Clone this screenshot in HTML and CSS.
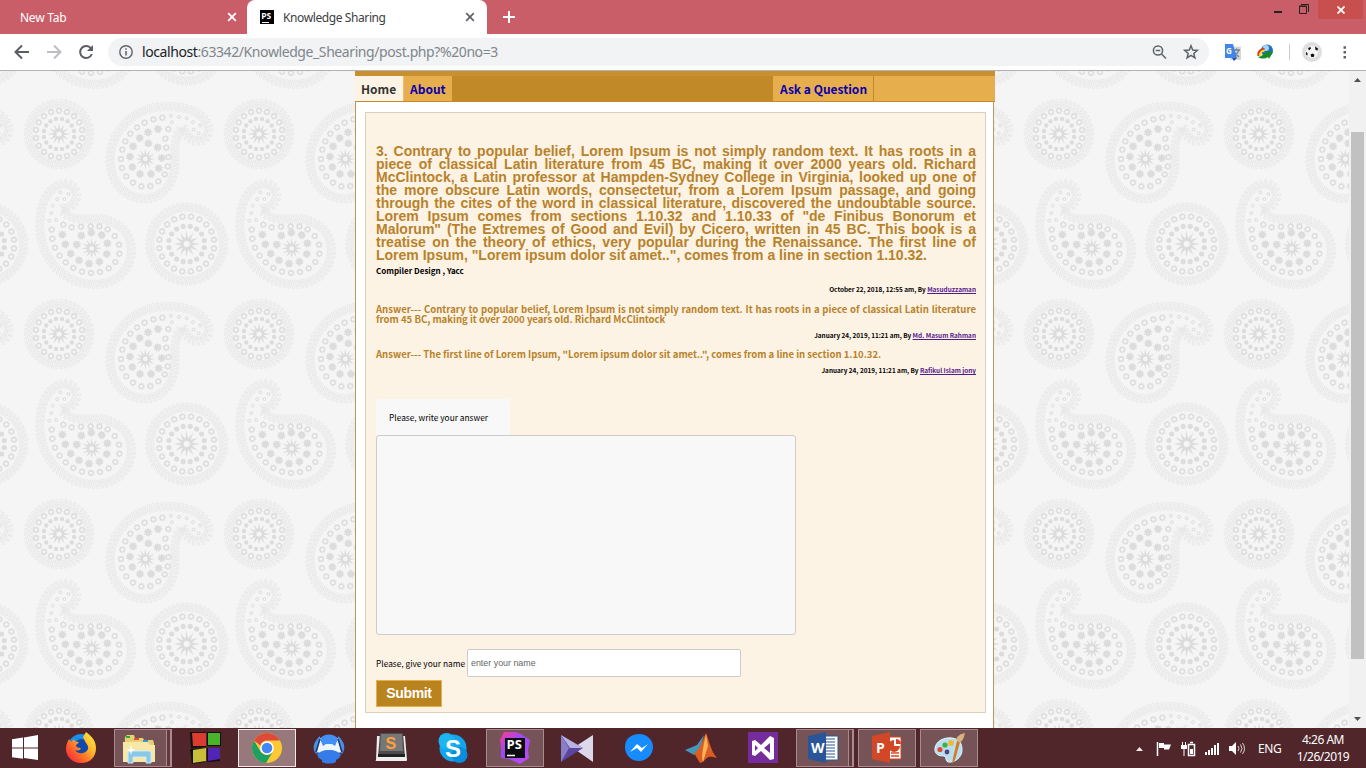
FILE: index.html
```html
<!DOCTYPE html>
<html lang="en">
<head>
<meta charset="utf-8">
<title>Knowledge Sharing</title>
<link rel="stylesheet" href="styles.css">
</head>
<body>
<div class="screen">
  <header class="tabstrip">
    <div class="tab tab-idle"><span class="t-new">New Tab</span>
      <svg width="10" height="10" viewBox="0 0 10 10"><path d="M1.2 1.2l7.6 7.6M8.800 1.200L1.200 8.800" stroke="#fff" stroke-width="1.8"/></svg></div>
    <div class="tab tab-on">
      <svg width="14" height="14" viewBox="0 0 14 14"><rect width="14" height="14"/><path d="M2 12.500h7" stroke="#fff"/><text x="1.200" y="9" class="ps-small">PS</text></svg>
      <span class="t-title">Knowledge Sharing</span>
      <svg width="10" height="10" viewBox="0 0 10 10"><path d="M1.200 1.200l7.600 7.600M8.800 1.200L1.200 8.800" stroke="#5f6368" stroke-width="1.7"/></svg></div>
    <svg class="plus" width="12" height="12" viewBox="0 0 12 12"><path d="M6 0v12M0 6h12" stroke="#fff" stroke-width="2"/></svg>
    <div class="winctl">
      <svg width="58" height="20" viewBox="0 0 58 20"><path d="M14 12h8" stroke="#222" stroke-width="2"/><path d="M39.500 6.500h7v7h-7zM39 6h8M41 4.500h7.500V12" fill="none" stroke="#222"/></svg>
      <div class="close"><svg width="8" height="8" viewBox="0 0 8 8"><path d="M.5.5l7 7M7.500.5l-7 7" stroke="#fff" stroke-width="1.800"/></svg></div>
    </div>
  </header>
  <div class="toolbar">
    <svg class="nav-icons" width="108" height="36" viewBox="0 0 108 36" fill="none" stroke-width="2">
      <path d="M29 18H16M22 11.500L15.500 18l6.500 6.500" stroke="#5a5e63"/>
      <path d="M47 18h13M54 11.500l6.500 6.500-6.500 6.500" stroke="#bcbec1"/>
      <path d="M91 14.500a6 6 0 1 0 .8 5.500" stroke="#5a5e63"/><path d="M93 11v6h-6z" fill="#5a5e63"/>
    </svg>
    <div class="omnibox">
      <svg width="14" height="14" viewBox="0 0 14 14"><circle cx="7" cy="7" r="6.200" fill="none" stroke="#5f6368" stroke-width="1.400"/><path d="M7 6v4.500M7 3.300v1.500" stroke="#5f6368" stroke-width="1.500"/></svg>
      <span class="url"><b>localhost</b>:63342/Knowledge_Shearing/post.php?%20no=3</span>
      <svg class="omni-end" width="50" height="18" viewBox="0 0 50 18" fill="none" stroke="#5f6368" stroke-width="1.500"><circle cx="7" cy="7.500" r="4.600"/><path d="M10.500 11l4.500 4.500M4.700 7.500h4.600"/><path d="M40 2.800l1.700 4.300 4.600.3-3.500 3 1.100 4.500L40 12.400l-3.900 2.500 1.100-4.500-3.500-3 4.600-.3z"/></svg>
    </div>
    <svg class="exts" width="156" height="36" viewBox="0 0 156 36">
      <path d="M21 12.500h10V26H20z" fill="#d8d8d8"/><path d="M23 16h7M26.500 14.500V16M29 16c-1 3-3 5-5 6M24 18l5 5" stroke="#6f8390" stroke-width="1.300" fill="none"/>
      <path d="M15 10h8l4 14H15z" fill="#4285e8"/><path d="M22 24h5l-3 3z" fill="#3949ab"/><text x="16" y="20" class="gt">G</text>
      <circle cx="57" cy="16.500" r="6" fill="#236fc2"/><circle cx="56" cy="14" r="3" fill="#a9d5ff"/><path d="M48.500 22c-1-4 2-7 6-7" stroke="#dd3520" stroke-width="2.200" fill="none"/><path d="M50.500 22c-1-3 1-5 4-5.500" stroke="#f5df20" stroke-width="2" fill="none"/><path d="M48 23c3 0 5-3 8-4l-1-2 8 1-4 7-1-2c-3 2-7 2-10 0z" fill="#168b23"/>
      <path d="M79.500 10v16" stroke="#ccc"/>
      <circle cx="102" cy="18" r="10" fill="#dedede"/><circle cx="102" cy="18" r="6" fill="#f6f6f6"/><path d="M100.500 20.500l2-1 2 1.300-.8 2.200h-2.400zM98 14l2.500-1 .5 1.500-2 2zM105 12.500l3 2-.5 2-2-.5zM96 18l1.500 1v2.500l-1.500-1z" fill="#111"/>
      <path d="M133.500 12.300h2.500v2.500h-2.500zM133.500 17.100h2.500v2.500h-2.500zM133.500 21.900h2.500v2.500h-2.500z" fill="#5f6368"/>
    </svg>
  </div>

  <main class="viewport">
    <svg class="wall" width="1349" height="657" viewBox="0 0 1349 657">
      <defs><pattern id="paisley" width="600" height="600" patternUnits="userSpaceOnUse" patternTransform="translate(0 1) scale(.33333)"></pattern></defs>
      <rect width="1349" height="657" fill="#f5f5f5"/><rect width="1349" height="657" fill="url(#paisley)"/>
    </svg>
    <div class="page">
      <nav class="menu">
        <a class="home">Home</a><a class="about">About</a><span class="fill"></span><a class="ask">Ask a Question</a><span class="rest"></span>
      </nav>
      <div class="sheet">
        <section class="card">
          <h1>3. Contrary to popular belief, Lorem Ipsum is not simply random text. It has roots in a<br>piece of classical Latin literature from 45 BC, making it over 2000 years old. Richard<br>McClintock, a Latin professor at Hampden-Sydney College in Virginia, looked up one of<br>the more obscure Latin words, consectetur, from a Lorem Ipsum passage, and going<br>through the cites of the word in classical literature, discovered the undoubtable source.<br>Lorem Ipsum comes from sections 1.10.32 and 1.10.33 of "de Finibus Bonorum et<br>Malorum" (The Extremes of Good and Evil) by Cicero, written in 45 BC. This book is a<br>treatise on the theory of ethics, very popular during the Renaissance. The first line of<br><span class="last">Lorem Ipsum, "Lorem ipsum dolor sit amet..", comes from a line in section 1.10.32.</span></h1>
          <p class="tags">Compiler Design , Yacc</p>
          <p class="by by1">October 22, 2018, 12:55 am, By <a>Masuduzzaman</a></p>
          <p class="answer"><span class="full">Answer--- Contrary to popular belief, Lorem Ipsum is not simply random text. It has roots in a piece of classical Latin literature</span><span>from 45 BC, making it over 2000 years old. Richard McClintock</span></p>
          <p class="by by2">January 24, 2019, 11:21 am, By <a>Md. Masum Rahman</a></p>
          <p class="answer"><span class="a2">Answer--- The first line of Lorem Ipsum, "Lorem ipsum dolor sit amet..", comes from a line in section 1.10.32.</span></p>
          <p class="by by3">January 24, 2019, 11:21 am, By <a>Rafikul Islam jony</a></p>
          <div class="label">Please, write your answer</div>
          <div class="textarea"></div>
          <div class="row"><span class="lbl">Please, give your name</span><div class="input">enter your name</div></div>
          <div class="submit">Submit</div>
        </section>
      </div>
    </div>
    <div class="scroll"><svg width="17" height="657" viewBox="0 0 17 657"><rect width="17" height="657" fill="#f1f1f1"/><rect x="2" y="61" width="13" height="527" fill="#c1c1c1"/><path d="M5 11h7L8.500 7zM5 646h7l-3.500 4z" fill="#505050"/></svg></div>
  </main>

  <footer class="taskbar">
    <svg class="start" viewBox="0 0 50 40"><path d="M12 11.200L23 9.600v10H12zM24 9.400L38 7v12.600H24zM12 20.600h11v10.200l-11-1.500zM24 20.600h14V32l-14-2z" fill="#fff"/></svg>
    <div class="slot"><svg viewBox="0 0 58 40"><defs><linearGradient id="fx" x1="1" y1="0" x2="0" y2="1"><stop offset="0" stop-color="#fff44a"/><stop offset=".4" stop-color="#ffb02a"/><stop offset=".7" stop-color="#ff5a2a"/><stop offset="1" stop-color="#ef1558"/></linearGradient></defs>
      <circle cx="29" cy="19" r="13" fill="#1c8eea"/><circle cx="30" cy="19" r="8" fill="#1348a8"/><path d="M34 4c5 4 10 8 10 16 0 9-6 15-15 15-8 0-15-6-15-14 0-5 2-8 3-10l2 3 3-3c0 2 2 3 5 3-1 2-3 2-3 4 0 1 3 2 5 2-1 3-4 3-6 2 3 5 11 4 13-1 1-4-3-6-5-12 1-2 2-3 3-5z" fill="url(#fx)"/></svg></div>
    <div class="slot open stack"><svg viewBox="0 0 58 40"><path d="M12 9l2-2h7l1 3h8l1 2h9l1 3v18H11z" fill="#e8cf72"/><path d="M10 14h25l2 3h5v17H10z" fill="#f7e8a8"/><path d="M13 8h4v2h-4z" fill="#27ae37"/><path d="M21 10h5v2h-5z" fill="#d9533c"/><path d="M30 12h5v2h-5z" fill="#3197e0"/><path d="M15 35v-9c0-2 1-3 3-3h17c2 0 3 1 3 3v9h-5v-6H20v6z" fill="#8ac8e8" stroke="#c9ecfb"/><path d="M18 17l1 4 4 1-4 1-1 4-1-4-4-1 4-1z" fill="#fff"/></svg></div>
    <div class="slot"><svg viewBox="0 0 58 40"><path d="M14 4h16v15l-15 1zM14 21l15-1v14l-13 2zM31 4h14v14H31zM31 20h13v13l-13 1z" fill="#10100c"/><path d="M16 5h14v13H17z" fill="#dc3c30"/><path d="M32 5h12v12H32z" fill="#49b32c"/><path d="M17 22l13-2v13l-13 2z" fill="#c8be3a"/><path d="M32 20h12v11l-12 2z" fill="#5224b4"/></svg></div>
    <div class="slot open active"><svg viewBox="0 0 58 40"><circle cx="29" cy="20" r="15" fill="#fcc934"/><path d="M16 12.500A15 15 0 0 1 42 12.500H29a7 7 0 0 0-6.500 5z" fill="#df4938"/><path d="M16 12.500A15 15 0 0 0 28 35l7-11.500c-3 5-10 4-12.500 0z" fill="#1da061"/><circle cx="29" cy="20" r="6.800" fill="#fff"/><circle cx="29" cy="20" r="5.300" fill="#4285f4"/></svg></div>
    <div class="slot"><svg viewBox="0 0 58 40"><path d="M20 8c-7 6-8 13-4 18l4-3zM38 8c7 6 8 13 4 18l-4-3z" fill="#4b8fe6"/><path d="M20 10l18 0 3 14-12 4-12-4z" fill="#eef5ff"/><path d="M20 11c3-6 15-6 18 0l-3 7-3-2h-6l-3 2z" fill="#438ff4"/><path d="M17 26c4-2 5-4 12-4s8 2 12 4c-1 4-3 5-5 6v2c-4 2-10 2-14 0v-2c-2-1-4-2-5-6z" fill="#367ce9"/><path d="M20 11l-4 13M38 11l4 13" stroke="#173a70" stroke-width="1.500"/></svg></div>
    <div class="slot"><svg viewBox="0 0 58 40"><path d="M15 8h28l2 24c0 1-1 1-2 1H15c-1 0-2 0-1-1z" fill="#eee"/><path d="M18 5h23l2 24H16z" fill="#4c4c4c"/><path d="M16 26h27v3H16z" fill="#222"/><path d="M19 6h21l1 17H18z" fill="#777"/><text x="23.500" y="21" class="sub">S</text></svg></div>
    <div class="slot"><svg viewBox="0 0 58 40"><circle cx="29" cy="20" r="13.500" fill="#12a7ed"/><circle cx="22.500" cy="13" r="8" fill="#1bb5f2"/><circle cx="35.500" cy="27" r="8" fill="#078ddd"/><text x="21" y="28.500" class="skype">S</text></svg></div>
    <div class="slot open"><svg viewBox="0 0 58 40"><defs><linearGradient id="ps" x1="0" y1="0" x2=".8" y2="1"><stop offset="0" stop-color="#ff3b92"/><stop offset=".45" stop-color="#9b48fa"/><stop offset="1" stop-color="#bc4af5"/></linearGradient></defs><path d="M18 4l12 0 5 2 9 6-2 10 1 8-9 6-11-5-8-1 0-10-1-8z" fill="url(#ps)"/><rect x="19" y="10" width="20" height="20" fill="#0c0c10"/><path d="M21 27.500h8" stroke="#fff" stroke-width="1.500"/><text x="20.500" y="21" class="psbig">PS</text></svg></div>
    <div class="slot"><svg viewBox="0 0 58 40"><path d="M45 7L25 20l20 14z" fill="#ddd8e9"/><path d="M13 7l22 13-22 14z" fill="#5a45a0"/><path d="M13 7l22 13-13 0z" fill="#b9b2de"/><path d="M13 7l8 13-8 14z" fill="#8a7dc8"/></svg></div>
    <div class="slot"><svg viewBox="0 0 58 40"><path d="M29 6c8 0 14 6 14 13s-6 14-14 14c-8 0-14-6-14-14s6-13 14-13z" fill="#168cff"/><path d="M20 24l7-8 5 4 6-4-7 8-4-4z" fill="#fff"/></svg></div>
    <div class="slot"><svg viewBox="0 0 58 40"><path d="M13 22l12-5 7-10-4 15-6 5z" fill="#4795b8"/><path d="M34 5c2 4 5 19 11 25-5-1-7-2-10 0-2 1-4 5-7 5l-6-10c5-1 9-14 12-20z" fill="#dc5d23"/><path d="M34 6l2 12-5 16c-2-5 0-14 3-28z" fill="#ffb455"/></svg></div>
    <div class="slot"><svg viewBox="0 0 58 40"><path d="M14 4h30v31H14z" fill="#752c9c"/><path fill-rule="evenodd" d="M18 13l3-1 6 5 9-9 4 2v21l-4 1-9-9-6 5-3-1zM21 17v6l3-3zM30 20l6 5V15z" fill="#fff"/></svg></div>
    <div class="slot open stack"><svg viewBox="0 0 58 40"><path d="M29 8h14v24H29z" fill="#fff" stroke="#2b5797"/><path d="M31 11h9M31 14h9M31 17h9M31 20h9M31 23h9M31 26h9M31 29h9" stroke="#2b5797" stroke-width="1.200"/><path d="M13 8l18-4v31l-18-4z" fill="#2a5699"/><text x="16" y="25" class="off" textLength="12">W</text></svg></div>
    <div class="slot open"><svg viewBox="0 0 58 40"><path d="M29 9h14v22H29z" fill="#fff" stroke="#d24726"/><path d="M36 12v6h6a6 6 0 1 1-6-6zM38 11a5 5 0 0 1 5 5h-5z" fill="#d24726"/><path d="M33 25h8M33 28h8" stroke="#d24726" stroke-width="1.300"/><path d="M14 8l18-4v31l-18-4z" fill="#d24726"/><text x="18" y="25" class="off">P</text></svg></div>
    <div class="slot open"><svg viewBox="0 0 58 40"><path d="M15 20c1-7 9-11 17-10s10 6 10 12c0 8-8 13-14 12-3-1-1-5-4-6-4 0-10-1-9-8z" fill="#b8dff0" stroke="#e6f5fb"/><circle cx="20" cy="21.500" r="2.600" fill="#e04a39"/><circle cx="25" cy="17" r="2.600" fill="#43ad41"/><circle cx="31" cy="15" r="3" fill="#f2b83a"/><circle cx="27" cy="24" r="2.400" fill="#547"/><path d="M40 14l-5 18-3 4 1-6 4-17z" fill="#d77a23"/><path d="M36 12c1-4 4-6 9-7-1 3-1 6-4 9z" fill="#d8b17c"/></svg></div>
    <div class="tray">
      <svg width="120" height="40" viewBox="0 0 120 40"><path d="M6 23h7l-3.500-4z" fill="#f4eaea"/>
      <path d="M27.500 14v14" stroke="#fff" stroke-width="1.500"/><path d="M29 15h5v1.500h7l-2 5h-5V20h-5z" fill="#fff"/>
      <path d="M52.500 14v4M55.500 14v4M54 21v7" stroke="#fff"/><path d="M51 17h6v4h-6z" fill="#fff"/><path d="M58.500 16.500h6v11h-6zM60 14.500h3" stroke="#fff" stroke-width="1.500" fill="none"/><path d="M60 21h3v5h-3z" fill="#fff"/>
      <path d="M75 24h2v3h-2zM78 22h2v5h-2zM81 20h2v7h-2zM84 17h2v10h-2zM87 15h2v12h-2z" fill="#fff"/>
      <path d="M99 18h3l4-4v13l-4-4h-3z" fill="#fff"/><path d="M108 18q2 2.500 0 5M110.500 16.500q3 4 0 8M112.500 15q4 5.500 0 11" stroke="#fff" stroke-width=".8" fill="none"/></svg>
      <span class="eng">ENG</span>
      <span class="clock">4:26 AM<br>1/26/2019</span>
    </div>
  </footer>
</div>
<script src="pattern.js"></script>
</body>
</html>
```
FILE: styles.css
```css
* { box-sizing: border-box; }
body { margin: 0; overflow: hidden; font-family: "Noto Sans", "Open Sans", sans-serif; }
.screen { width: 1366px; height: 768px; display: flex; flex-direction: column; }
svg { display: block; flex: none; }
.tabstrip { height: 34px; background: #c95e68; display: flex; align-items: flex-start; }
.tab { height: 34px; display: flex; align-items: center; font-size: 12px; white-space: nowrap; }
.tab-idle { width: 247px; padding: 0 10px 0 20px; justify-content: space-between; color: #fff; }
.tab-on { width: 240px; background: #fff; border-radius: 8px 8px 0 0; padding: 0 12px 0 13px; color: #3c4043; }
.t-title { margin-left: 9px; flex: 1; letter-spacing: -.4px; }
.t-new { letter-spacing: -.25px; }
.plus { margin: 11px 0 0 16px; }
.winctl { margin-left: auto; display: flex; width: 103px; margin-right: 3px; }
.close { width: 45px; height: 19px; background: #c7504f; display: flex; align-items: center; justify-content: center; }
.ps-small { font: bold 8.500px "Open Sans", sans-serif; fill: #fff; }
.toolbar { height: 37px; background: #fff; border-bottom: 1px solid #b3b1b2; display: flex; }
.omnibox { width: 1101px; height: 28px; margin-top: 4px; border-radius: 14px; background: #f1f3f4; display: flex; align-items: center; padding-left: 11px; }
.url { margin-left: 9px; font-size: 14px; color: #80868b; white-space: nowrap; letter-spacing: -.41px; margin-top: -1px; }
.url b { font-weight: 400; color: #202124; }
.omni-end { margin: 0 8px 0 auto; }
.exts { margin-left: 1px; }
.gt { font: bold 8px "Open Sans", sans-serif; fill: #fff; }
.viewport { height: 657px; display: grid; grid-template-columns: 355px 640px 1fr 17px; overflow: hidden; }
.wall { grid-area: 1 / 1 / 2 / 4; }
.page { grid-area: 1 / 2; display: flex; flex-direction: column; font-family: "Noto Sans CJK SC", sans-serif; }
.scroll { grid-area: 1 / 4; }
.menu { border-top: 5px solid #c9902f; height: 31px; border-bottom: 1px solid #c28a2b; display: flex; font-size: 12px; line-height: 25px; font-weight: 700; background: #c28928; flex: none; white-space: nowrap; }
.home { width: 49px; background: #fdf3e5; color: #333; padding-left: 6px; border-right: 1px solid #f0be6b; }
.about { width: 48px; background: #e6ae4c; padding-left: 6px; color: #0a00ad; }
.fill { flex: 1; }
.ask { width: 101px; background: #e6ae4c; padding-left: 7px; border-right: 1px solid #c28928; color: #0a00ad; }
.rest { width: 121px; background: #e6ae4c; }
.sheet { width: 639px; flex: 1; background: #fff; border: solid #b9975a; border-width: 0 1px; padding: 10px 7px 0 9px; }
.card { width: 621px; height: 601px; border: 1px solid #d9d0c2; background: #fdf3e5; padding: 32px 0 0 10px; }
h1 { margin: 0; width: 600px; font: bold 14px/13px "Liberation Sans", Arial, sans-serif; color: #b8822a; text-align: justify; text-align-last: justify; }
.last { display: inline-block; width: 551px; white-space: nowrap; }
p { margin: 0; width: 600px; font-weight: 700; white-space: nowrap; }
.tags { font-size: 8px; line-height: 12px; margin-top: 3px; color: #000; }
.by { font-size: 6.400px; line-height: 10px; text-align: right; color: #000; }
.by a { color: #551a8b; text-decoration: underline; }
.by1 { margin-top: 8px; }
.by2 { margin-top: 7px; }
.by3 { margin-top: 7px; }
.answer { font-size: 9.550px; line-height: 10px; margin-top: 9px; color: #b8822a; }
.by2 + .answer { margin-top: 8px; }
.answer span { display: block; }
.answer .full { text-align-last: justify; }
.label { width: 134px; height: 36px; margin-top: 23px; background: #f8f8f8; border-radius: 3px 3px 0 0; padding-left: 13px; font-size: 8.350px; line-height: 36px; white-space: nowrap; }
.textarea { width: 420px; height: 200px; background: #f8f8f8; border: 1px solid #ccc; border-radius: 3px; }
.row { display: flex; margin-top: 14px; align-items: center; font-size: 8.350px; }
.lbl { width: 91px; white-space: nowrap; }
.input { width: 274px; height: 28px; border: 1px solid #ccc; border-radius: 2px; background: #fff; font: 8.900px/26px "Liberation Sans", Arial, sans-serif; color: #666; padding-left: 3px; }
.submit { width: 66px; height: 27px; margin-top: 3px; background: #b9831f; border: 1px solid #e6ae4c; color: #fff; text-align: center; font: bold 14px/25px "Liberation Sans", Arial, sans-serif; letter-spacing: -.35px; }
.taskbar { height: 40px; background: #50262b; display: flex; }
.start { width: 50px; height: 40px; margin-right: 2px; }
.slot { width: 58px; height: 40px; margin-right: 4px; flex: none; }
.slot svg { width: 58px; height: 40px; }
.open { height: 38px; margin-top: 1px; background: #765357; border: 1px solid #a68c8f; }
.open svg { margin: -2px 0 0 -1px; }
.active { background: #97797c; border-color: #efe9e9; }
.stack { width: 53px; margin-right: 9px; box-shadow: 4px 0 0 -1px #62383d, 5px 0 0 0 #a68c8f; }
.stack svg { margin-left: -2px; }
.sub { font: bold 16px "Liberation Sans", sans-serif; fill: #ffa13d; }
.skype { font: bold 24px "Liberation Sans", sans-serif; fill: #fff; }
.psbig { font: bold 13px "Open Sans", sans-serif; fill: #fff; }
.off { font: bold 14px "Open Sans", sans-serif; fill: #fff; }
.tray { margin-left: auto; display: flex; align-items: center; color: #fff; font-size: 12px; width: 236px; }
.eng { width: 33px; margin-left: 8px; letter-spacing: -.4px; }
.clock { width: 56px; text-align: center; margin-left: 4px; line-height: 17px; letter-spacing: -.5px; white-space: nowrap; }
```
FILE: pattern.js
```js
const NS = 'http://www.w3.org/2000/svg';
const pattern = document.getElementById('paisley');

function ringTrim(d) {
  const p = document.createElementNS(NS, 'path');
  p.setAttribute('d', d);
  const len = p.getTotalLength();
  const n = Math.round(len / 12.5);
  let s = '';
  for (let i = 0; i < n; i++) {
    const t = i * len / n;
    const a = p.getPointAtLength(t), b = p.getPointAtLength(Math.min(len, t + 1));
    const dx = b.x - a.x, dy = b.y - a.y, m = Math.hypot(dx, dy) || 1;
    [-9, 0, 9].forEach((o, k) => {
      const sh = k * 4;
      s += `<circle cx="${a.x - dy / m * o + dx / m * sh}" cy="${a.y + dx / m * o + dy / m * sh}" r="4"/>`;
    });
  }
  return `<g fill="none" stroke="#e3e3e3" stroke-width="2.4">${s}</g>`;
}
function star(x, y, R, r, n) {
  let pts = '';
  for (let i = 0; i < n * 2; i++) {
    const q = i % 2 ? r : R, a = Math.PI * i / n;
    pts += `${x + q * Math.sin(a)},${y - q * Math.cos(a)} `;
  }
  return `<polygon points="${pts}" fill="#dcdcdc"/>`;
}
const flower = (x, y) => star(x, y, 11.5, 8, 10) + `<circle cx="${x}" cy="${y}" r="4.8" fill="#f5f5f5"/>`;
const bead = (x, y) => `<circle cx="${x}" cy="${y}" r="4.5" fill="none" stroke="#dadada" stroke-width="3"/>`;
const solid = (x, y) => star(x, y, 14, 9, 9);
const sun = (x, y, R) => star(x, y, R, R * .42, 12) + `<circle cx="${x}" cy="${y}" r="${R * .23}" fill="#f5f5f5"/>`;
const each = (pts, f) => pts.map(p => f(p[0], p[1])).join('');

function medallion(cx, cy, R, fr, nf, dr, sr) {
  const b = R - 13;
  let s = ringTrim(`M${cx - b} ${cy}a${b} ${b} 0 1 1 ${2 * b} 0a${b} ${b} 0 1 1 ${-2 * b} 0z`);
  for (let i = 0; i < nf; i++) {
    const a = 2 * Math.PI * i / nf + (nf === 20 ? .08 : 0) * 2;
    s += flower(cx + fr * Math.sin(a), cy - fr * Math.cos(a));
  }
  for (let i = 0; i < 16; i++) {
    const a = 2 * Math.PI * (i + .5) / 16;
    s += `<circle cx="${cx + dr * Math.sin(a)}" cy="${cy - dr * Math.cos(a)}" r="${R / 16}" fill="#dcdcdc"/>`;
  }
  return s + sun(cx, cy, sr);
}

const tile =
  medallion(177, 186, 105, 70, 18, 46, 34) +
  medallion(560, 516, 124, 83, 20, 54, 40) +
  ringTrim('M548 165C560 200 580 210 598 207C620 205 628 185 625 165C610 115 550 103 500 103C400 103 330 180 330 265C330 335 380 380 435 380C490 380 525 330 525 270C525 230 522 190 548 165') +
  each([[487,137],[460,142],[434,152],[411,166],[391,185],[376,208],[367,233],[363,261],[366,288],[379,313],[399,332],[424,343],[451,342],[475,328],[494,307],[503,283],[505,255],[499,227],[496,200],[505,171]], flower) +
  each([[513,131],[537,135],[560,139],[579,151],[600,160],[596,184],[581,173],[516,151]], bead) +
  each([[474,171],[444,181],[419,198],[445,214],[399,223],[473,226],[390,254],[485,258],[397,285],[476,289],[420,306],[453,306]], solid) +
  sun(436, 261, 31) +
  ringTrim('M185 410C215 410 230 390 229 368C227 340 200 330 180 338C140 350 119 400 120 465C122 560 190 637 285 637C350 637 394 590 394 535C394 470 340 440 285 440C240 440 200 445 185 410') +
  each([[190,458],[215,466],[243,464],[272,463],[298,463],[323,472],[344,492],[357,518],[358,545],[346,570],[326,589],[300,600],[273,603],[246,599],[220,588],[197,571],[179,551],[165,527],[157,500],[155,473]], flower) +
  each([[181,361],[205,366],[172,382],[193,381],[158,401],[154,423],[148,446],[169,444]], bead) +
  each([[187,488],[244,491],[274,482],[305,489],[196,517],[230,518],[322,514],[212,545],[320,546],[237,565],[267,575],[298,569]], solid) +
  sun(275, 529, 31);

let copies = '';
for (const x of [-600, 0]) for (const y of [-600, 0]) copies += `<g transform="translate(${x} ${y})">${tile}</g>`;
pattern.innerHTML = copies;
```
